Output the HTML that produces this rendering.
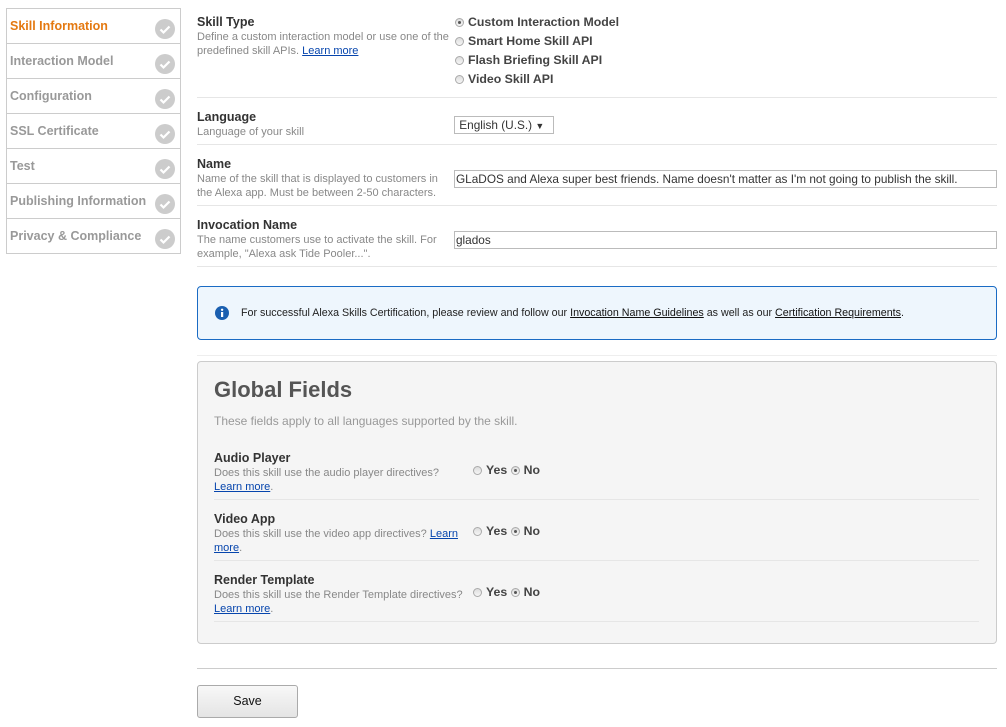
<!DOCTYPE html>
<html><head><meta charset="utf-8"><style>
*{box-sizing:border-box;margin:0;padding:0}
body{width:1006px;height:727px;background:#fff;font-family:"Liberation Sans",Arial,sans-serif;position:relative;overflow:hidden;color:#333}
.a{position:absolute;white-space:nowrap}
.side{position:absolute;left:6px;top:8px;width:175px;height:246px;border:1px solid #ccc}
.it{position:absolute;left:0;width:173px;height:35px;border-bottom:1px solid #ccc}
.it span{position:absolute;left:3px;top:10px;font-size:12.5px;font-weight:bold;color:#999}
.it svg{position:absolute;left:148px;top:10px}
.lbl{font-size:12.5px;font-weight:bold;color:#333}
.desc{font-size:11px;color:#888;line-height:14px;white-space:normal}
.hr{position:absolute;height:1px;background:#e6e6e6}
.rad{display:inline-block;width:9px;height:9px;border-radius:50%;border:1px solid #aaa;background:linear-gradient(#ddd,#f6f6f6);vertical-align:-1px;margin-right:4px;position:relative}
.rad.on::after{content:"";position:absolute;left:2px;top:2px;width:3px;height:3px;border-radius:50%;background:#555}
.ro{font-size:12.3px;font-weight:bold;color:#444}
.inp{position:absolute;border:1px solid #bbb;height:18px;font-size:11.8px;padding-left:1px;line-height:16px;color:#333}
a{color:#0645ad;text-decoration:underline}
.blk{color:#111;text-decoration:underline}
</style></head><body>
<div class="side">
<div class="it" style="top:0"><span style="color:#e47911;left:3px">Skill Information</span><svg width="20" height="20"><circle cx="10" cy="10" r="10" fill="#ccc"/><path d="M5.5 10.5l3 3 6-6" stroke="#fff" stroke-width="2.2" fill="none"/></svg></div>
<div class="it" style="top:35px"><span>Interaction Model</span><svg width="20" height="20"><circle cx="10" cy="10" r="10" fill="#ccc"/><path d="M5.5 10.5l3 3 6-6" stroke="#fff" stroke-width="2.2" fill="none"/></svg></div>
<div class="it" style="top:70px"><span>Configuration</span><svg width="20" height="20"><circle cx="10" cy="10" r="10" fill="#ccc"/><path d="M5.5 10.5l3 3 6-6" stroke="#fff" stroke-width="2.2" fill="none"/></svg></div>
<div class="it" style="top:105px"><span>SSL Certificate</span><svg width="20" height="20"><circle cx="10" cy="10" r="10" fill="#ccc"/><path d="M5.5 10.5l3 3 6-6" stroke="#fff" stroke-width="2.2" fill="none"/></svg></div>
<div class="it" style="top:140px"><span>Test</span><svg width="20" height="20"><circle cx="10" cy="10" r="10" fill="#ccc"/><path d="M5.5 10.5l3 3 6-6" stroke="#fff" stroke-width="2.2" fill="none"/></svg></div>
<div class="it" style="top:175px"><span>Publishing Information</span><svg width="20" height="20"><circle cx="10" cy="10" r="10" fill="#ccc"/><path d="M5.5 10.5l3 3 6-6" stroke="#fff" stroke-width="2.2" fill="none"/></svg></div>
<div class="it" style="top:210px;border-bottom:none"><span>Privacy &amp; Compliance</span><svg width="20" height="20"><circle cx="10" cy="10" r="10" fill="#ccc"/><path d="M5.5 10.5l3 3 6-6" stroke="#fff" stroke-width="2.2" fill="none"/></svg></div>
</div>

<div class="a lbl" style="left:197px;top:15px">Skill Type</div>
<div class="a desc" style="left:197px;top:30px;width:255px">Define a custom interaction model or use one of the predefined skill APIs. <a href="#">Learn more</a></div>
<div class="a ro" style="left:455px;top:15px"><span class="rad on"></span>Custom Interaction Model</div>
<div class="a ro" style="left:455px;top:34px"><span class="rad"></span>Smart Home Skill API</div>
<div class="a ro" style="left:455px;top:53px"><span class="rad"></span>Flash Briefing Skill API</div>
<div class="a ro" style="left:455px;top:72px"><span class="rad"></span>Video Skill API</div>
<div class="hr" style="left:197px;top:97px;width:800px"></div>

<div class="a lbl" style="left:197px;top:110px">Language</div>
<div class="a desc" style="left:197px;top:125px">Language of your skill</div>
<div class="inp" style="left:454px;top:116px;width:100px">&nbsp;English (U.S.) <span style="font-size:9px">&#9660;</span></div>
<div class="hr" style="left:197px;top:144px;width:800px"></div>

<div class="a lbl" style="left:197px;top:157px">Name</div>
<div class="a desc" style="left:197px;top:172px;width:245px">Name of the skill that is displayed to customers in the Alexa app. Must be between 2-50 characters.</div>
<div class="inp" style="left:454px;top:170px;width:543px">GLaDOS and Alexa super best friends. Name doesn't matter as I'm not going to publish the skill.</div>
<div class="hr" style="left:197px;top:205px;width:800px"></div>

<div class="a lbl" style="left:197px;top:218px">Invocation Name</div>
<div class="a desc" style="left:197px;top:233px;width:245px">The name customers use to activate the skill. For example, "Alexa ask Tide Pooler...".</div>
<div class="inp" style="left:454px;top:231px;width:543px">glados</div>
<div class="hr" style="left:197px;top:266px;width:800px"></div>

<div class="a" style="left:197px;top:286px;width:800px;height:54px;border:1px solid #1a6bc4;border-radius:4px;background:#eef6fd"></div>
<svg class="a" style="left:215px;top:306px" width="14" height="14"><circle cx="7" cy="7" r="7" fill="#1a5fb0"/><rect x="6" y="6" width="2.2" height="5" fill="#fff"/><circle cx="7.1" cy="3.8" r="1.2" fill="#fff"/></svg>
<div class="a" style="left:241px;top:307px;font-size:10.7px;color:#222">For successful Alexa Skills Certification, please review and follow our <span class="blk">Invocation Name Guidelines</span> as well as our <span class="blk">Certification Requirements</span>.</div>
<div class="hr" style="left:197px;top:355px;width:800px;background:#eee"></div>

<div class="a" style="left:197px;top:361px;width:800px;height:283px;border:1px solid #ccc;border-radius:4px;background:#f5f5f5"></div>
<div class="a" style="left:214px;top:377px;font-size:22px;font-weight:bold;color:#555">Global Fields</div>
<div class="a" style="left:214px;top:414px;font-size:12px;color:#999">These fields apply to all languages supported by the skill.</div>

<div class="a lbl" style="left:214px;top:451px">Audio Player</div>
<div class="a desc" style="left:214px;top:466px;width:250px">Does this skill use the audio player directives?<br><a href="#">Learn more</a>.</div>
<div class="a ro" style="left:473px;top:463px"><span class="rad"></span>Yes <span class="rad on"></span>No</div>
<div class="hr" style="left:214px;top:499px;width:765px"></div>

<div class="a lbl" style="left:214px;top:512px">Video App</div>
<div class="a desc" style="left:214px;top:527px;width:250px">Does this skill use the video app directives? <a href="#">Learn</a><br><a href="#">more</a>.</div>
<div class="a ro" style="left:473px;top:524px"><span class="rad"></span>Yes <span class="rad on"></span>No</div>
<div class="hr" style="left:214px;top:560px;width:765px"></div>

<div class="a lbl" style="left:214px;top:573px">Render Template</div>
<div class="a desc" style="left:214px;top:588px;width:250px">Does this skill use the Render Template directives?<br><a href="#">Learn more</a>.</div>
<div class="a ro" style="left:473px;top:585px"><span class="rad"></span>Yes <span class="rad on"></span>No</div>
<div class="hr" style="left:214px;top:621px;width:765px"></div>

<div class="hr" style="left:197px;top:668px;width:800px;background:#ccc"></div>
<div class="a" style="left:197px;top:685px;width:101px;height:33px;border:1px solid #aaa;border-radius:3px;background:linear-gradient(#f8f8f8,#e4e4e4);font-size:12.5px;color:#111;text-align:center;line-height:31px">Save</div>
</body></html>
